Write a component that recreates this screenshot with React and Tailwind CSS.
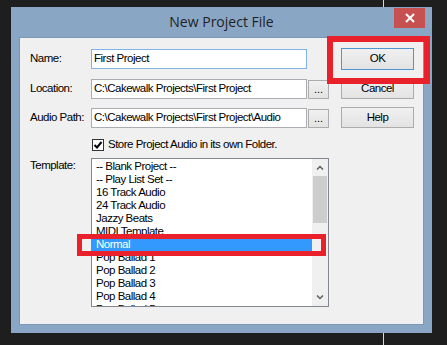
export default function App() {
  const items = [
    "-- Blank Project --",
    "-- Play List Set --",
    "16 Track Audio",
    "24 Track Audio",
    "Jazzy Beats",
    "MIDI Template",
    "Normal",
    "Pop Ballad 1",
    "Pop Ballad 2",
    "Pop Ballad 3",
    "Pop Ballad 4",
    "Pop Ballad 5",
  ];
  const btn =
    "w-[73px] h-[21px] border bg-gradient-to-b from-[#f0f0f0] to-[#e3e3e3] flex items-center justify-center leading-none";
  const browse =
    "ml-[1px] w-[21px] h-[19px] border border-[#acacac] bg-gradient-to-b from-[#f0f0f0] to-[#e3e3e3] flex items-end justify-center pb-[3px] leading-none text-[11px] tracking-normal";
  return (
    <div className="relative w-[447px] h-[345px] bg-[#1e1e1e] overflow-hidden font-['Liberation_Sans',Arial,sans-serif] text-[11.5px] tracking-[-0.5px] text-black">
      <div className="absolute left-[383px] top-0 w-px h-full bg-[#d8d8d8]" />
      <div className="relative z-10 ml-[11px] mt-[7px] w-[421px] h-[326px] bg-[#8aa6c5] flex flex-col">
        <div className="relative h-[30px] flex items-center justify-center">
          <span className="font-['Open_Sans',sans-serif] text-[14px] tracking-normal text-[#1f1f1f] leading-none">
            New Project File
          </span>
          <div className="absolute right-[7px] top-[1px] w-[31px] h-[20px] bg-[#c75050] flex items-center justify-center">
            <svg width="10" height="10" viewBox="0 0 10 10">
              <path d="M1 1 L9 9 M9 1 L1 9" stroke="white" strokeWidth="2" />
            </svg>
          </div>
        </div>
        <div className="mx-[8px] h-[288px] bg-[#f0f0f0] border border-[#7d97b5] flex whitespace-nowrap">
          <div className="pl-[10px] pt-[11px] flex flex-col">
            <div className="flex items-center h-[20px]">
              <span className="w-[61px]">Name:</span>
              <div className="w-[216px] h-[20px] bg-white border border-[#7eb4ea] flex items-center pl-[2px]">
                First Project
              </div>
            </div>
            <div className="flex items-center h-[20px] mt-[10px]">
              <span className="w-[61px]">Location:</span>
              <div className="w-[216px] h-[20px] bg-white border border-[#abadb3] flex items-center pl-[2px] overflow-hidden">
                C:\Cakewalk Projects\First Project
              </div>
              <div className={browse}>...</div>
            </div>
            <div className="flex items-center h-[20px] mt-[9px]">
              <span className="w-[61px]">Audio Path:</span>
              <div className="w-[216px] h-[20px] bg-white border border-[#abadb3] flex items-center pl-[2px] overflow-hidden">
                C:\Cakewalk Projects\First Project\Audio
              </div>
              <div className={browse}>...</div>
            </div>
            <div className="flex items-center h-[13px] mt-[10px] pl-[62px]">
              <svg width="12" height="12" viewBox="0 0 12 12" className="shrink-0">
                <rect x="0.5" y="0.5" width="11" height="11" fill="white" stroke="#333" />
                <path d="M2.5 6 L5 8.5 L9.5 3" fill="none" stroke="black" strokeWidth="2" />
              </svg>
              <span className="ml-[4px]">Store Project Audio in its own Folder.</span>
            </div>
            <div className="flex items-start mt-[7px]">
              <span className="w-[61px] leading-[14px]">Template:</span>
              <div className="w-[238px] h-[149px] bg-white border border-[#828790] flex">
                <div className="flex-1 pt-[1px] overflow-hidden">
                  {items.map((it) => (
                    <div
                      key={it}
                      className={
                        "h-[13px] leading-[13px] pl-[4px] " +
                        (it === "Normal" ? "bg-[#3399ff] text-white" : "")
                      }
                    >
                      {it}
                    </div>
                  ))}
                </div>
                <div className="w-[16px] h-full bg-[#f0f0f0] flex flex-col">
                  <div className="h-[17px] flex items-center justify-center">
                    <svg width="8" height="5" viewBox="0 0 8 5">
                      <path d="M1 4.5 L4 1.5 L7 4.5" fill="none" stroke="#606060" strokeWidth="1.5" />
                    </svg>
                  </div>
                  <div className="mx-[1px] h-[47px] bg-[#cdcdcd]" />
                  <div className="flex-1" />
                  <div className="h-[17px] flex items-center justify-center">
                    <svg width="8" height="5" viewBox="0 0 8 5">
                      <path d="M1 0.5 L4 3.5 L7 0.5" fill="none" stroke="#606060" strokeWidth="1.5" />
                    </svg>
                  </div>
                </div>
              </div>
            </div>
          </div>
          <div className="ml-[12px] pt-[10px] flex flex-col gap-[8px]">
            <div className={btn + " border-[#4f95cf] h-[22px]"}>OK</div>
            <div className={btn + " border-[#acacac]"}>Cancel</div>
            <div className={btn + " border-[#acacac]"}>Help</div>
          </div>
        </div>
      </div>
      <div className="absolute z-20 left-[327px] top-[36px] w-[103px] h-[48px] border-[6px] border-[#e8212b]" />
      <div className="absolute z-20 left-[77px] top-[234px] w-[249px] h-[22px] border-[5px] border-[#e8212b]" />
    </div>
  );
}
